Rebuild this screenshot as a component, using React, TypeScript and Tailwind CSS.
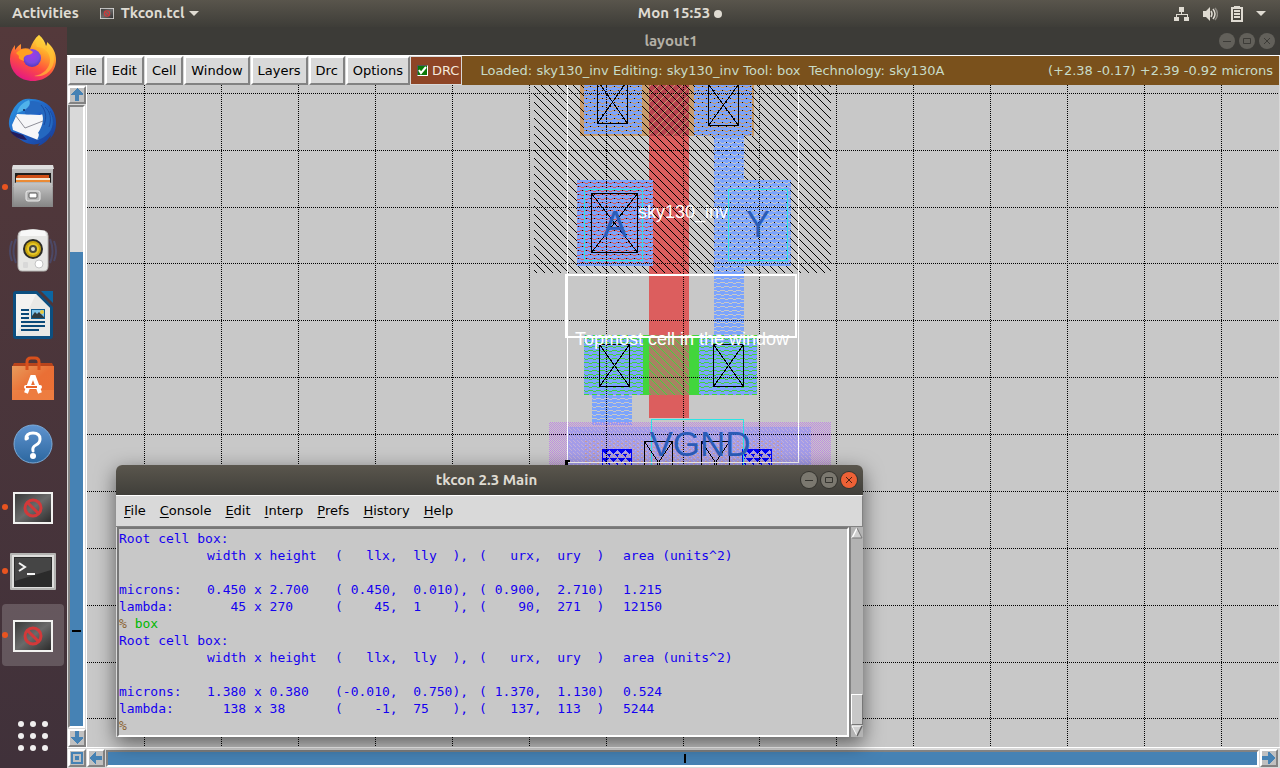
import type { ReactNode } from "react";

const ui = "font-['DejaVu_Sans',sans-serif]";
const shell = "font-['Ubuntu','Noto_Sans',sans-serif] font-bold";

/* ---------- launcher icons ---------- */

const Icon = ({ children }: { children: ReactNode }) => (
  <svg viewBox="0 0 64 64" className="h-16 w-16" aria-hidden="true">
    {children}
  </svg>
);

const Firefox = () => (
  <Icon>
    <defs>
      <linearGradient id="fxBody" x1="0.8" y1="0" x2="0.3" y2="1">
        <stop offset="0" stopColor="#fff44f" />
        <stop offset="0.35" stopColor="#ffa42b" />
        <stop offset="0.65" stopColor="#ff4f3e" />
        <stop offset="1" stopColor="#e31587" />
      </linearGradient>
      <radialGradient id="fxGlobe" cx="0.5" cy="0.35" r="0.7">
        <stop offset="0" stopColor="#a03ae8" />
        <stop offset="0.6" stopColor="#7a4ae0" />
        <stop offset="1" stopColor="#4a34b4" />
      </radialGradient>
    </defs>
    <path
      d="M38 8c4 3 6 7 7 11 1-1 1-3 1-4 6 5 9 11 9 18 0 12-10 21-23 21S9 45 9 32c0-6 2-10 5-14v5c2-3 4-5 6-6v5c3-1 6-1 9 0 2-6 5-11 9-14z"
      fill="url(#fxBody)"
    />
    <circle cx="31" cy="31" r="9" fill="url(#fxGlobe)" />
    <path d="M36 20c8 0 13 6 13 13 0 8-7 15-16 16 11 2 20-6 20-17 0-6-3-11-7-14 0 3 0 4-1 5-2-5-3-9-7-15-3 4-4 8-2 12z" fill="#ffc936" opacity="0.65" />
    <path d="M15 26c4-4 9-5 14-3l3 2c-1 2-3 3-6 3-3 1-4 3-3 6-4-1-6-3-5-5-1-1-2-2-3-3z" fill="#ffa020" />
  </Icon>
);

const Thunderbird = () => (
  <Icon>
    <defs>
      <linearGradient id="tbBody" x1="0" y1="0" x2="1" y2="1">
        <stop offset="0" stopColor="#2fa0e6" />
        <stop offset="0.5" stopColor="#1f5fc4" />
        <stop offset="1" stopColor="#173a92" />
      </linearGradient>
    </defs>
    <path
      d="M17 12c4-4 9-5 13-4 12 0 22 7 24 17 2 7 1 14-2 19l-3 4 1-4c-3 5-7 9-13 11l2-3c-5 3-14 1-19-3C12 44 7 38 8 30c1-7 5-14 9-18z"
      fill="url(#tbBody)"
    />
    <path d="M11 34l5-11 23 1 3-1c3 7 1 17-5 26L12 39z" fill="#f6f6f8" />
    <path d="M15 25l9 12 18-7" fill="none" stroke="#8f8f98" strokeWidth="1" />
    <path d="M9 40l13 4 4 5c-7 0-14-4-17-9z" fill="#231c5c" />
    <path d="M24 23c8 1 14-2 16-2 3 4 3 12-3 21 2 1 0 5-1 7 9-2 16-10 17-19-1-12-12-20-23-20-4 1-6 4-6 13z" fill="#2468c0" />
    <path d="M16 22c1-6 6-11 12-13 3 5-2 10-12 13z" fill="#50b2ea" />
    <circle cx="23" cy="19" r="1" fill="#12245a" />
    <path d="M44 16c5 4 7 12 4 20M49 20c4 6 4 12 2 18M40 14c5 6 6 12 3 20" stroke="#1a4aa0" fill="none" />
  </Icon>
);

const Files = () => (
  <Icon>
    <defs>
      <linearGradient id="cab" x1="0" y1="0" x2="0" y2="1">
        <stop offset="0" stopColor="#c4c4c4" />
        <stop offset="1" stopColor="#858585" />
      </linearGradient>
    </defs>
    <path d="M12 10h40v42H11V14z" fill="url(#cab)" />
    <path d="M12 10h40l1 4H11z" fill="#dedede" />
    <rect x="14" y="18" width="36" height="12" fill="#1f1d1c" />
    <path d="M17 20h31v8H15v-6z" fill="#cf4f16" />
    <rect x="15" y="23" width="34" height="2" fill="#f4e6d0" />
    <rect x="15" y="25" width="34" height="2" fill="#ea8a35" />
    <path d="M15 27h34l3 5H12z" fill="#b5b5b5" />
    <rect x="13" y="28" width="38" height="24" fill="url(#cab)" />
    <rect x="25" y="36" width="14" height="10" rx="2" fill="#b8b8b8" stroke="#ececec" />
    <rect x="28" y="38" width="8" height="5" rx="1" fill="#fff" stroke="#555" />
  </Icon>
);

const Rhythmbox = () => (
  <Icon>
    <path d="M15 20q-5 12 0 24M11 22q-4 10 0 20M49 20q5 12 0 24M53 22q4 10 0 20" stroke="#4a5a90" strokeWidth="2" fill="none" opacity="0.5" />
    <path d="M20 12q12-3 24 0 3 1 3 5v30q0 5-4 5H21q-4 0-4-5V17q0-4 3-5z" fill="#e6e6e4" stroke="#b8b8b6" />
    <path d="M20 12q12-3 24 0l1 5H19z" fill="#f8f8f8" />
    <circle cx="32" cy="30" r="10" fill="#2c2c28" />
    <circle cx="32" cy="30" r="8" fill="#c9a50e" />
    <circle cx="32" cy="30" r="6" fill="#e6c828" />
    <circle cx="32" cy="30" r="4" fill="#4c4a3c" />
    <circle cx="32" cy="30" r="2" fill="#dcdcc8" />
    <circle cx="38" cy="45" r="4" fill="#fff" stroke="#c4c4c4" />
    <rect x="22" y="43" width="5" height="6" rx="1" fill="#d8d8d8" />
  </Icon>
);

const Writer = () => (
  <Icon>
    <path d="M15 8h21l16 16v29q0 3-3 3H15q-3 0-3-3V11q0-3 3-3z" fill="#0c4f80" />
    <path d="M40 8h12v12z" fill="#0c66a2" />
    <path d="M15 11h20l14 14v28H15z" fill="#f3f3f1" />
    <path d="M35 11l14 14V53H15z" fill="#e2e2e0" opacity="0.6" />
    <path d="M20 27h8M20 31h8M20 35h8M20 39h24M20 43h24M20 47h18" stroke="#0b4a78" strokeWidth="2" />
    <rect x="30" y="26" width="14" height="10" fill="#0d5c92" />
    <rect x="31" y="27" width="12" height="8" fill="#7ec3ea" />
    <path d="M31 35v-2l3-4 2 2 2-2 5 5v1z" fill="#2f3b40" />
    <circle cx="41" cy="29" r="2" fill="#e8c93f" />
  </Icon>
);

const Software = () => (
  <Icon>
    <defs>
      <linearGradient id="bag" x1="0" y1="0" x2="1" y2="1">
        <stop offset="0" stopColor="#e89b5c" />
        <stop offset="0.5" stopColor="#ea6f35" />
        <stop offset="1" stopColor="#ec7034" />
      </linearGradient>
    </defs>
    <path d="M13 16h38l2 4H11z" fill="#b8441c" />
    <path d="M11 19h42v34H11z" fill="url(#bag)" />
    <path d="M11 43h42v10H11z" fill="#f08a4c" opacity="0.5" />
    <path d="M26 23v-8q0-4 4-4h4q4 0 4 4v8" fill="none" stroke="#d8501c" strokeWidth="3" />
    <path d="M25 46l6-16h2l6 16" fill="none" stroke="#fff" strokeWidth="4" />
    <rect x="23" y="38" width="18" height="4" rx="2" fill="#fff" />
    <rect x="25" y="39" width="11" height="2" fill="#ea6428" />
  </Icon>
);

const Help = () => (
  <Icon>
    <defs>
      <linearGradient id="hlp" x1="0" y1="0" x2="0" y2="1">
        <stop offset="0" stopColor="#5f93cf" />
        <stop offset="1" stopColor="#2c679f" />
      </linearGradient>
    </defs>
    <circle cx="32" cy="33" r="19" fill="url(#hlp)" stroke="#7cabd8" />
    <path d="M25 28q0-6 7-6t7 6q0 4-4 6t-3 6" fill="none" stroke="#fff" strokeWidth="3" strokeLinecap="round" />
    <circle cx="26" cy="27" r="2" fill="#fff" />
    <circle cx="32" cy="45" r="3" fill="#fff" />
  </Icon>
);

const NoEntryArt = () => (
  <>
    <defs>
      <linearGradient id="scr" x1="0" y1="0" x2="1" y2="1">
        <stop offset="0" stopColor="#3a3a3a" />
        <stop offset="0.5" stopColor="#6a6a6a" />
        <stop offset="1" stopColor="#2c2c2c" />
      </linearGradient>
    </defs>
    <rect x="12" y="17" width="40" height="32" fill="#f2f2f0" />
    <rect x="14" y="19" width="36" height="28" fill="url(#scr)" />
    <circle cx="32" cy="33" r="8" fill="none" stroke="#d2393a" strokeWidth="3" />
    <path d="M26 27l12 12" stroke="#d2393a" strokeWidth="3" />
  </>
);

const NoEntry = () => (
  <Icon>
    <NoEntryArt />
  </Icon>
);

const Terminal = () => (
  <Icon>
    <rect x="9" y="14" width="46" height="37" rx="1" fill="#b4b4b2" />
    <rect x="11" y="16" width="42" height="33" fill="#dededc" />
    <rect x="13" y="18" width="38" height="30" fill="#2b2b2b" />
    <path d="M14 19h36v12L14 42z" fill="#454545" />
    <path d="M18 24l6 4-6 4" fill="none" stroke="#f4f4f4" strokeWidth="2" />
    <rect x="26" y="34" width="8" height="2" fill="#f4f4f4" />
  </Icon>
);

const AppsGrid = () => (
  <Icon>
    {[20, 32, 44].map((y) =>
      [20, 32, 44].map((x) => <circle key={`${x}-${y}`} cx={x} cy={y} r="3" fill="#f0eeee" />),
    )}
  </Icon>
);

const launchers = [
  { name: "Firefox", Art: Firefox },
  { name: "Thunderbird", Art: Thunderbird },
  { name: "Files", Art: Files, running: true },
  { name: "Rhythmbox", Art: Rhythmbox },
  { name: "LibreOffice Writer", Art: Writer },
  { name: "Ubuntu Software", Art: Software },
  { name: "Help", Art: Help },
  { name: "Magic", Art: NoEntry, running: true },
  { name: "Terminal", Art: Terminal, running: true },
  { name: "Tkcon", Art: NoEntry, running: true, active: true },
];

const Launcher = () => (
  <aside className="flex w-[67px] shrink-0 flex-col items-center bg-linear-to-b from-[#54393b] to-[#40313a]">
    {launchers.map(({ name, Art, running, active }) => (
      <button key={name} aria-label={name} className="relative flex h-16 w-full items-center justify-center pr-px">
        {active && <span className="absolute inset-y-px right-[3px] left-[2px] rounded bg-white/18" />}
        {running && <span className="absolute left-[2px] size-[6px] rounded-full bg-[#e95420]" />}
        <span className="relative">
          <Art />
        </span>
      </button>
    ))}
    <button aria-label="Show Applications" className="mt-auto pr-px">
      <AppsGrid />
    </button>
  </aside>
);

/* ---------- shell top bar ---------- */

const Caret = () => (
  <svg viewBox="0 0 10 6" className="h-[6px] w-[10px]" aria-hidden="true">
    <path d="M0 0h10L5 5z" fill="#dfdbd2" />
  </svg>
);

const TopBar = () => (
  <header className={`${shell} grid h-[27px] shrink-0 grid-cols-3 items-center bg-linear-to-b from-[#59554c] to-[#3e3d38] text-[15px] text-[#dfdbd2]`}>
    <div className="flex items-center pl-3">
      <button>Activities</button>
      <button className="ml-[21px] flex items-center gap-[7px]">
        <svg viewBox="12 17 40 32" className="h-[11px] w-[14px]" aria-hidden="true">
          <NoEntryArt />
        </svg>
        <span className="flex items-center gap-[5px]">
          Tkcon.tcl <Caret />
        </span>
      </button>
    </div>
    <button className="flex items-center justify-center gap-1 pl-20">
      Mon 15:53 <span className="size-2 rounded-full bg-[#dfdbd2]" />
    </button>
    <div className="flex items-center justify-end gap-3 pr-[14px]">
      <svg viewBox="0 0 16 16" className="size-4" fill="#dfdbd2" aria-label="Network">
        <path d="M5 1h5v5H8v2h6v3h1v4h-5v-4h3V9H3v2h2v4H0v-4h2V8h5V6H5z" />
      </svg>
      <svg viewBox="0 0 16 16" className="size-4" aria-label="Volume">
        <path d="M1 5h3l4-4v14l-4-4H1z" fill="#dfdbd2" />
        <path d="M9 5q2 3 0 6M11 3q4 5 0 10" fill="none" stroke="#dfdbd2" strokeWidth="1.5" />
        <path d="M13 2q5 6 0 12" fill="none" stroke="#8a877f" strokeWidth="1.5" />
      </svg>
      <svg viewBox="0 0 12 16" className="mx-px h-4 w-3" aria-label="Battery">
        <path d="M3 0h6v1h3v15H0V1h3zM2 3v11h8V3z" fill="#dfdbd2" fillRule="evenodd" />
        <path d="M3 5h6M3 8h6M3 11h6" stroke="#dfdbd2" strokeWidth="2" />
      </svg>
      <Caret />
    </div>
  </header>
);

/* ---------- window buttons ---------- */

const WindowButtons = ({ focused }: { focused?: boolean }) => {
  const plain = focused
    ? "flex size-4 items-center justify-center rounded-full bg-[#7b786f] text-[#35342f] ring-1 ring-[#35342f]"
    : "flex size-4 items-center justify-center rounded-full bg-[#62605a] text-[#3c3b37]";
  const close = focused
    ? "flex size-4 items-center justify-center rounded-full bg-[#ee6136] text-[#4a2213] ring-1 ring-[#35342f]"
    : plain;
  return (
    <div className="flex gap-1">
      <button aria-label="Minimize" className={plain}>
        <svg viewBox="0 0 16 16" className="size-4"><path d="M4 8.500h8" stroke="currentColor" /></svg>
      </button>
      <button aria-label="Maximize" className={plain}>
        <svg viewBox="0 0 16 16" className="size-4"><path d="M4.500 5.500h7v5h-7z" fill="none" stroke="currentColor" /></svg>
      </button>
      <button aria-label="Close" className={close}>
        <svg viewBox="0 0 16 16" className="size-4"><path d="M5 5l6 6M11 5l-6 6" stroke="currentColor" /></svg>
      </button>
    </div>
  );
};

/* ---------- chip layout drawing ---------- */

const range = (n: number) => Array.from({ length: n }, (_, i) => i);
const gridX = [144, 221, 298, 375, 452, 529, 606, 683, 759, 836, 913, 990, 1067, 1144, 1221];
const gridY = [93, 150, 207, 263, 320, 377, 434, 491, 548, 605, 662, 718];

const Contact = ({ x, y, w, h }: { x: number; y: number; w: number; h: number }) => (
  <path
    d={`M${x} ${y}h${w}v${h}h-${w}zl${w} ${h}M${x + w} ${y}l-${w} ${h}`}
    fill="none"
    stroke="#000"
    strokeWidth="1"
  />
);

const Layout = () => (
  <svg
    viewBox="87 85 1192 662"
    preserveAspectRatio="xMinYMin slice"
    className="min-h-0 min-w-0 flex-1 bg-[#c8c8c8]"
    shapeRendering="crispEdges"
    role="img"
    aria-label="sky130_inv layout"
  >
    <defs>
      <pattern id="well" width="8" height="8" patternUnits="userSpaceOnUse">
        {range(8).map((i) => <rect key={i} x={i} y={i} width="1" height="1" />)}
      </pattern>
      <pattern id="ngate" width="8" height="8" patternUnits="userSpaceOnUse">
        {range(8).map((i) => <rect key={i} x={i} y={i} width="1" height="1" fill="#42d63c" />)}
      </pattern>
      <pattern id="pgate" width="8" height="8" patternUnits="userSpaceOnUse">
        {range(8).map((i) => <rect key={i} x={i} y={7 - i} width="1" height="1" fill="#c89c6c" />)}
      </pattern>
      <pattern id="metal" width="8" height="8" patternUnits="userSpaceOnUse">
        <path d="M0 0h8v2h-8zM5 2h3v1h-3zM0 3h5v1h-5zM0 4h8v2h-8zM1 6h3v1h-3zM0 7h1v1h-1zM4 7h4v1h-4z" fill="#7ca4fc" />
      </pattern>
      <pattern id="purple" width="2" height="2" patternUnits="userSpaceOnUse">
        <path d="M0 0h1v1h-1zM1 1h1v1h-1z" fill="#c08ce0" />
      </pattern>
      <pattern id="rail" width="4" height="4" patternUnits="userSpaceOnUse">
        <rect width="4" height="4" fill="#a49ce8" />
        <path d="M1 0h1v1h-1zM3 2h1v1h-1zM2 1h1v1h-1z" fill="#c4b0d8" />
      </pattern>
      <pattern id="tap" width="8" height="4" patternUnits="userSpaceOnUse">
        <path d="M1 1h2v1h-2zM5 3h2v1h-2z" fill="#cc9a90" />
      </pattern>
      <pattern id="tri" width="8" height="8" patternUnits="userSpaceOnUse" x="602" y="449">
        <path d="M0 1h7v1h-1v1h-1v1h-1v1h-1v-1h-1v-1h-1v-1h-1zM4 5h7v1h-1v1h-1v1h-2v-1h-1v-1h-1zM0 5h1v1h-1z" fill="#0000f8" />
      </pattern>
    </defs>

    <path d="M580 85h174v51h-174z" fill="#c89c6c" />
    <path d="M649 85h40v333h-40z" fill="#dc5e5e" />
    <path d="M577 180h76v86h-76z" fill="#dc5e5e" />
    <path d="M649 85h40v51h-40z" fill="#b84450" />
    <path d="M649 85h40v51h-40z" fill="url(#pgate)" />
    <path d="M534 85h297v188h-297z" fill="url(#well)" />
    <path d="M584 335h173v60h-173z" fill="#42d63c" />
    <path d="M649 335h40v60h-40z" fill="#a88262" />
    <path d="M649 335h40v60h-40z" fill="url(#ngate)" />

    <path
      d="M584 85h58v49h-58zM694 85h58v51h-8v44h47v86h-47v71h13v58h-58v-60h15v-199h-20zM577 180h76v86h-76zM584 335h59v60h-11v30h-40v-30h-8z"
      fill="url(#metal)"
    />

    <path d="M549 422h282v60h-282z" fill="url(#purple)" />
    <path d="M567 427h244v55h-244z" fill="url(#rail)" />
    <path d="M583 440h199v42h-199z" fill="url(#tap)" />
    <path d="M602 449h30v30h-30zM742 449h30v30h-30z" fill="url(#tri)" />
    <path d="M602.500 449.500h29v30h-29zM742.500 449.500h29v30h-29z" fill="none" stroke="#0000f8" />

    {gridX.map((x) => (
      <path key={x} d={`M${x + 0.5} 85v2000`} stroke="#000" strokeDasharray="1 1" />
    ))}
    {gridY.map((y) => (
      <path key={y} d={`M87 ${y + 0.5}h3000`} stroke="#000" strokeDasharray="1 1" />
    ))}

    <path d="M584.500 189.500h58v71h-58zM728.500 189.500h59v71h-59zM651.500 419.500h92v60h-92z" fill="none" stroke="#2ce4e4" />

    <Contact x={597.5} y={80.5} w={30} h={43} />
    <Contact x={708.5} y={84.5} w={30} h={41} />
    <Contact x={591.5} y={193.5} w={46} h={59} />
    <Contact x={599.5} y={344.5} w={30} h={42} />
    <Contact x={713.5} y={344.5} w={30} h={42} />
    <Contact x={644.5} y={441.5} w={28} h={42} />
    <Contact x={701.5} y={441.5} w={28} h={42} />

    <g fill="#2a5cb8" className="font-['Liberation_Sans',sans-serif] text-[36px]" textAnchor="middle">
      <text x="615" y="237">A</text>
      <text x="758" y="237">Y</text>
      <text x="700" y="456" className="text-[35px]">VGND</text>
    </g>

    <path d="M567.500 80v382.500h231v-382.500" fill="none" stroke="#fff" />
    <path d="M565 460h5v2h-2v3h-3z" fill="#000" />
    <path d="M566 275h230v62h-230z" fill="none" stroke="#fff" strokeWidth="2" />

    <g fill="#fff" className="font-['Liberation_Sans',sans-serif] text-[18px]" textAnchor="middle">
      <text x="683" y="218">sky130_inv</text>
      <text x="682" y="345">Topmost cell in the window</text>
    </g>
  </svg>
);

/* ---------- layout window ---------- */

const raised = "border-2 border-t-white border-l-white border-r-[#828282] border-b-[#828282]";

const ArrowButton = ({ label, d }: { label: string; d: string }) => (
  <button aria-label={label} className={`${raised} flex size-[18px] shrink-0 items-center justify-center bg-[#c0c0c0]`}>
    <svg viewBox="0 0 14 14" className="size-[14px]" fill="#4682b4" shapeRendering="crispEdges" fillRule="evenodd">
      <path d={d} />
    </svg>
  </button>
);

const LayoutWindow = () => (
  <section className="flex min-w-0 flex-1 flex-col bg-[#d9d9d9]">
    <div className={`${shell} grid h-7 shrink-0 grid-cols-[1fr_auto_1fr] items-center bg-[#3c3b37] pr-[5px] text-[15px] text-[#b4b0a6]`}>
      <span />
      <h1>layout1</h1>
      <div className="flex justify-end">
        <WindowButtons />
      </div>
    </div>
    <div className={`${ui} flex h-[30px] shrink-0 border-t border-white bg-[#d9d9d9] pr-px pl-px text-[13px] text-black`}>
      <nav className="flex gap-px">
        {["File", "Edit", "Cell", "Window", "Layers", "Drc", "Options"].map((t) => (
          <button key={t} className={`${raised} bg-[#d9d9d9] px-[5px]`}>{t}</button>
        ))}
      </nav>
      <label className="flex items-center gap-1 border border-[#d9d9d9] bg-[#8e4526] pr-[2px] pl-[6px] text-[#f4e8dc]">
        <span className="relative flex size-[11px]">
          <input type="checkbox" defaultChecked className="size-[11px] appearance-none border border-t-[#555] border-l-[#555] border-r-white border-b-white bg-[#0a7a0a]" />
          <svg viewBox="0 0 11 11" className="pointer-events-none absolute inset-0"><path d="M2 5l2 3 5-6" fill="none" stroke="#fff" strokeWidth="2" /></svg>
        </span>
        DRC
      </label>
      <div className="flex flex-1 items-center justify-between bg-[#7a511c] pr-[6px] pl-[18px] whitespace-pre text-[#c8dcc8]">
        <span>Loaded: sky130_inv Editing: sky130_inv Tool: box  Technology: sky130A</span>
        <span>(+2.38 -0.17) +2.39 -0.92 microns</span>
      </div>
    </div>
    <div className="flex min-h-0 flex-1 pr-px">
      <div className="flex w-5 shrink-0 flex-col items-center gap-px border-r border-white pt-px">
        <ArrowButton label="Scroll up" d="M7 0l6 6v1H9v6H5V7H1V6z" />
        <div className="flex w-[17px] flex-1 flex-col border-2 border-t-[#828282] border-l-[#828282] border-r-white border-b-white">
          <div className="h-[145px] shrink-0 bg-[#d9d9d9]" />
          <div className="flex flex-1 flex-col items-center bg-[#4682b4]">
            <div className="h-[378px]" />
            <div className="h-[2px] w-[9px] bg-black" />
          </div>
        </div>
        <ArrowButton label="Scroll down" d="M7 13l6-6V6H9V0H5v6H1v1z" />
      </div>
      <Layout />
    </div>
    <div className="flex h-[21px] shrink-0 items-center gap-px border-t border-white pr-[2px] pl-px">
      <ArrowButton label="Zoom to fit" d="M1 1h12v12H1zM3 3v8h8V3zM5 5h4v4H5z" />
      <ArrowButton label="Scroll left" d="M0 7l6-6h1v4h6v4H7v4H6z" />
      <div className="flex h-[17px] flex-1 items-center justify-center border-2 border-t-[#828282] border-l-[#828282] border-r-white border-b-white bg-[#4682b4] pl-1">
        <div className="h-[9px] w-[2px] bg-black" />
      </div>
      <ArrowButton label="Scroll right" d="M13 7L7 1H6v4H0v4h6v4h1z" />
    </div>
  </section>
);

/* ---------- console window ---------- */

type Row = [string, string, string, string, string];

const header: Row = ["", "width x height", "(   llx,  lly  ),", "(   urx,  ury  )", "area (units^2)"];

const firstBox: Row[] = [
  header,
  ["", "", "", "", ""],
  ["microns:", "0.450 x 2.700", "( 0.450,  0.010),", "( 0.900,  2.710)", "1.215"],
  ["lambda:", "   45 x 270", "(    45,  1    ),", "(    90,  271  )", "12150"],
];

const secondBox: Row[] = [
  header,
  ["", "", "", "", ""],
  ["microns:", "1.380 x 0.380", "(-0.010,  0.750),", "( 1.370,  1.130)", "0.524"],
  ["lambda:", "  138 x 38", "(    -1,  75   ),", "(   137,  113  )", "5244"],
];

const BoxReport = ({ rows }: { rows: Row[] }) => (
  <>
    <p>Root cell box:</p>
    <table className="w-full table-fixed">
      <colgroup>
        <col className="w-[88px]" />
        <col className="w-[128px]" />
        <col className="w-[144px]" />
        <col className="w-[144px]" />
        <col />
      </colgroup>
      <tbody>
        {rows.map((row, r) => (
          <tr key={r} className="h-[17px]">
            {row.map((cell, c) => (
              <td key={c} className="p-0">{cell}</td>
            ))}
          </tr>
        ))}
      </tbody>
    </table>
  </>
);

const Prompt = ({ children }: { children?: ReactNode }) => (
  <p>
    <span className="text-[#8b6434]">% </span>
    <span className="text-[#00b800]">{children}</span>
  </p>
);

const Console = () => (
  <section className="absolute top-[465px] left-[116px] flex w-[747px] flex-col rounded-t-md bg-[#d9d9d9] shadow-[0_6px_20px_rgba(0,0,0,0.55)]">
    <div className={`${shell} grid h-[30px] grid-cols-[1fr_auto_1fr] items-center rounded-t-md bg-linear-to-b from-[#5a564d] to-[#403f3a] pr-[6px] text-[15px] text-[#dfdbd2]`}>
      <span />
      <h2>tkcon 2.3 Main</h2>
      <div className="flex justify-end">
        <WindowButtons focused />
      </div>
    </div>
    <nav className={`${ui} flex h-8 items-center gap-[14px] border-t border-r border-b border-t-white border-r-[#828282] border-b-[#828282] bg-[#d9d9d9] px-2 text-[13px] text-black`}>
      {["File", "Console", "Edit", "Interp", "Prefs", "History", "Help"].map((t) => (
        <button key={t}>
          <span className="underline underline-offset-2">{t[0]}</span>
          {t.slice(1)}
        </button>
      ))}
    </nav>
    <div className="flex h-[210px] pl-px">
      <div className="flex-1 overflow-hidden border-2 border-t-[#777] border-r-white border-b-white border-l-[#777] bg-[#c8c8c8] pt-px font-['DejaVu_Sans_Mono',monospace] text-[13px] leading-[17px] whitespace-pre text-[#1400f0]">
        <BoxReport rows={firstBox} />
        <Prompt>box</Prompt>
        <BoxReport rows={secondBox} />
        <Prompt />
      </div>
      <div className="flex w-[14px] flex-col border-l-2 border-[#828282] bg-[#b3b3b3]">
        <svg viewBox="0 0 12 12" className="size-3 bg-[#b3b3b3]"><path d="M6 1l5 10H1z" fill="#d0d0d0" /><path d="M1 11L6 1" stroke="#fff" strokeWidth="1.5" /><path d="M6 1l5 10H1" fill="none" stroke="#777" /></svg>
        <div className="flex-1" />
        <div className="h-[31px] border border-t-white border-r-[#777] border-b-[#777] border-l-white bg-[#c8c8c8]" />
        <svg viewBox="0 0 12 12" className="size-3 bg-[#b3b3b3]"><path d="M6 11L1 1h10z" fill="#d0d0d0" /><path d="M6 11L1 1h10" fill="none" stroke="#fff" /><path d="M11 1L6 11" stroke="#666" strokeWidth="1.5" /></svg>
      </div>
    </div>
  </section>
);

export default function App() {
  return (
    <div className="relative flex h-screen flex-col overflow-hidden bg-[#3c3b37]">
      <TopBar />
      <div className="flex min-h-0 flex-1">
        <Launcher />
        <LayoutWindow />
      </div>
      <Console />
    </div>
  );
}
